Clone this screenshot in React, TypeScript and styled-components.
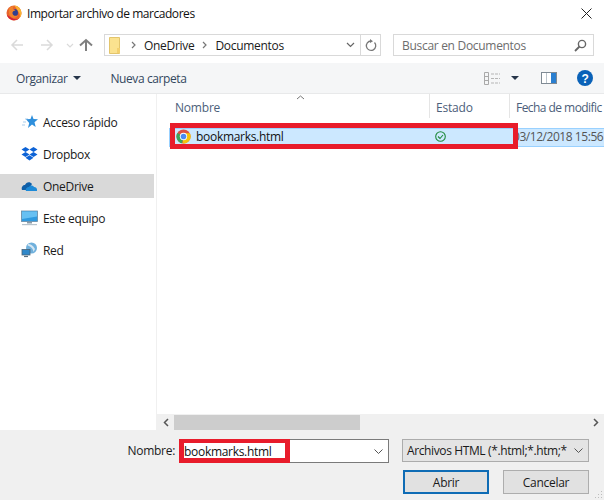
import React from "react";
import styled, { createGlobalStyle } from "styled-components";

const Global = createGlobalStyle`
  html, body { margin: 0; padding: 0; background: #fff; }
  * { box-sizing: border-box; }
`;

const Dialog = styled.div`
  width: 604px; height: 500px; display: flex; flex-direction: column; overflow: hidden;
  font-family: "Open Sans", "Noto Sans", sans-serif; font-size: 12px; color: #1a1a1a; background: #fff; letter-spacing: -0.3px;
`;
const TitleBar = styled.div`
  height: 26px; flex: none; display: flex; align-items: center; padding: 0 12px 0 6px; gap: 5px;
`;
const Title = styled.span`flex: 1; font-size: 12px; color: #111; letter-spacing: -0.45px;`;
const NavRow = styled.div`
  height: 37px; flex: none; display: flex; align-items: center; padding: 1px 10px 0 10px;
`;
const NavIcons = styled.div`width: 94px; flex: none; display: flex; align-items: center;`;
const AddressBar = styled.div`
  width: 277px; height: 22px; flex: none; border: 1px solid #d9d9d9; display: flex; align-items: center; padding-left: 4px;
`;
const Crumbs = styled.div`flex: 1; display: flex; align-items: center; gap: 8px; color: #1a1a1a;`;
const CrumbArrow = styled.svg<{ $first?: boolean }>`margin-left: ${p => (p.$first ? 2 : 0)}px;`;
const Refresh = styled.div`
  width: 20px; height: 20px; border-left: 1px solid #d9d9d9; display: flex; align-items: center; justify-content: center;
`;
const Dropdown = styled.div`width: 20px; display: flex; align-items: center; justify-content: center;`;
const SearchBox = styled.div`
  margin-left: 12px; width: 201px; height: 22px; flex: none; border: 1px solid #d9d9d9; display: flex; align-items: center;
  justify-content: space-between; padding: 0 6px 0 8px; color: #6d6d6d;
`;
const ToolBar = styled.div`
  height: 31px; flex: none; background: #f5f6f7; border-bottom: 1px solid #e8e9ea; display: flex; align-items: center;
  padding: 0 11px 0 16px; color: #33475e;
`;
const ToolLabel = styled.span`display: inline-flex; align-items: center; gap: 6px; margin-right: 29px; letter-spacing: -0.4px;`;
const Spacer = styled.div`flex: 1;`;
const ToolIcons = styled.div`display: flex; align-items: center;`;
const ToolIcon = styled.svg<{ $gap: number }>`margin-left: ${p => p.$gap}px;`;
const Main = styled.div`flex: 1; min-height: 0; display: flex;`;
const Sidebar = styled.div`
  width: 157px; flex: none; border-right: 1px solid #f0f0f0; padding-top: 16px; padding-right: 2px; display: flex; flex-direction: column; gap: 8px;
`;
const NavItem = styled.div<{ $active?: boolean }>`
  height: 24px; display: flex; align-items: center; gap: 5px; padding-left: 21px;
  background: ${p => (p.$active ? "#d9d9d9" : "transparent")}; color: #1a1a1a;
`;
const FileArea = styled.div`flex: 1; min-width: 0; display: flex; flex-direction: column; position: relative;`;
const Header = styled.div`height: 24px; flex: none; display: flex; color: #4c607a; position: relative; letter-spacing: -0.2px;`;
const HeadCell = styled.div<{ $w: number; $pad?: number; $last?: boolean }>`
  width: ${p => p.$w}px; flex: none; height: 24px; padding: 2px 0 0 ${p => p.$pad ?? 6}px; display: flex; align-items: center; white-space: nowrap; overflow: hidden;
  border-right: ${p => (p.$last ? "0" : "1px solid #e5e5e5")};
  letter-spacing: ${p => (p.$last ? "-0.55px" : "-0.2px")};
`;
const SortCaret = styled.svg`position: absolute; left: 139px; top: 1px;`;
const Rows = styled.div`flex: 1; padding-top: 10px; padding-left: 12px;`;
const FileRow = styled.div`
  height: 19px; display: flex; align-items: center; background: #cce8ff; border: 1px solid #99d1ff; border-right: 0; padding-bottom: 2px;
`;
const NameCell = styled.div`width: 261px; flex: none; display: flex; align-items: center; gap: 5px; padding-left: 6px; color: #111;`;
const StateCell = styled.div`width: 80px; flex: none; padding-left: 4px; display: flex;`;
const DateCell = styled.div`white-space: nowrap; color: #555; padding-left: 2px; letter-spacing: -0.45px;`;
const RowFrame = styled.div`
  position: absolute; left: 13px; top: 29px; width: 348px; height: 26px; border: 5px solid #e81c2b; pointer-events: none;
`;
const HScroll = styled.div`height: 16px; flex: none; background: #f0f0f0; display: flex; align-items: center;`;
const ScrollBtn = styled.div`width: 17px; flex: none; display: flex; align-items: center; justify-content: center;`;
const ScrollTrack = styled.div`flex: 1; height: 15px;`;
const Thumb = styled.div`width: 186px; height: 100%; background: #cdcdcd;`;
const Footer = styled.div`
  height: 70px; flex: none; background: #f0f0f0; position: relative; padding: 9px 15px 0 0; display: flex; flex-direction: column; gap: 7px;
`;
const FooterRow = styled.div`display: flex; justify-content: flex-end; align-items: flex-start;`;
const FieldLabel = styled.span`margin-right: 4px; color: #1a1a1a; line-height: 24px;`;
const NameInput = styled.div`
  width: 210px; height: 24px; background: #fff; border: 1px solid #7a7a7a; position: relative; display: flex; align-items: center; justify-content: flex-end; padding-right: 5px;
`;
const NameText = styled.span`
  position: absolute; left: 4px; top: 3px; color: #111; line-height: 17px;
`;
const NameFrame = styled.div`
  position: absolute; left: -1px; top: -1px; width: 111px; height: 24px; border: solid #e81c2b; border-width: 4px 5px 5px 5px; pointer-events: none;
`;
const TypeSelect = styled.div`
  margin-left: 13px; width: 187px; height: 23px; background: #e4e4e4; border: 1px solid #acacac; display: flex; align-items: center;
  justify-content: space-between; padding: 0 5px 0 4px; color: #1a1a1a; white-space: nowrap; letter-spacing: -0.38px;
`;
const Btn = styled.div<{ $primary?: boolean }>`
  width: 86px; height: 24px; display: flex; align-items: center; justify-content: center; color: #1a1a1a;
  background: #e1e1e1; border: ${p => (p.$primary ? "2px solid #0f6cb5" : "1px solid #adadad")}; margin-left: ${p => (p.$primary ? 0 : 14)}px;
`;
const Grip = styled.svg`position: absolute; right: 1px; bottom: 1px;`;

const Firefox = () => (
  <svg width="16" height="16" viewBox="0 0 16 16">
    <circle cx="8" cy="8" r="7.5" fill="#e8632b" />
    <path d="M8 .5a7.5 7.5 0 0 1 7.5 7.5c0 2-1 4-2 5 .6-2 .4-4-.6-5.500C12 6 10.500 3 8 .5z" fill="#f9b233" />
    <path d="M1 10a7.500 7.500 0 0 0 12 3.500c-2 1-5 1-7-.5C4 12 2.500 11 1 10z" fill="#d2203c" />
    <circle cx="8.200" cy="7.800" r="3.800" fill="#2f3f8f" />
    <path d="M3 4c1-2 3-3 5-3-1 1-1.500 2-1 3 1 .3 2 .8 2.500 1.500C8 5.500 6 6.500 6.500 8.500 7 11 10 11.500 12 10c-1 2.500-4 3.500-6 2.500C3.500 11.500 2.500 8 3 4z" fill="#f0822c" />
  </svg>
);
const Chrome = () => (
  <svg width="15" height="15" viewBox="0 0 16 16">
    <circle cx="8" cy="8" r="7.500" fill="#dd5144" />
    <path d="M8 8 1.500 4.200A7.500 7.500 0 0 0 6.500 15.300z" fill="#3ba55c" />
    <path d="M8 4.500h6.800A7.500 7.500 0 0 1 7 15.400L8 8z" fill="#f4c20d" />
    <circle cx="8" cy="8" r="3.900" fill="#fff" />
    <circle cx="8" cy="8" r="3" fill="#4a8af4" />
  </svg>
);
const Star = () => (
  <svg width="17" height="16" viewBox="0 0 17 16">
    <path d="M4 5h3M2 8h3M1 11h3" stroke="#a9cdec" strokeWidth="1" />
    <path d="M11 1l1.500 4 4.500.3-3.500 3 1.200 4.700L11 10.500 7 14l1.200-5L5 5.300 9.500 5z" fill="#2e8fdc" />
  </svg>
);
const Dropbox = () => (
  <svg width="17" height="16" viewBox="0 0 16 16" fill="#0d63d6">
    <path d="M4 1l4 2.500L4 6 0 3.500zM12 1l4 2.500L12 6 8 3.500zM4 6l4 2.500L4 11 0 8.500zM12 6l4 2.500L12 11 8 8.500zM4 11.700 8 9.200l4 2.500L8 14.500z" />
  </svg>
);
const Cloud = () => (
  <svg width="17" height="16" viewBox="0 0 17 16">
    <path d="M1 12c-1-3 1-5 3-5 1-3 5-4 7-1l-4 6z" fill="#0f5fa8" />
    <path d="M5 13c-1-2 1-4 3-4 1-2 4-2 5 0 2 0 3.500 1.500 3 4z" fill="#1c8ad8" />
  </svg>
);
const Monitor = () => (
  <svg width="17" height="16" viewBox="0 0 17 16">
    <rect x="0.500" y="1" width="16" height="10.500" fill="#2f9ae0" stroke="#6c8ba3" strokeWidth="0.800" />
    <path d="M1 1.500h15v5L1 9z" fill="#67c0f2" />
    <path d="M6 12h5v1.500H6z" fill="#8b9aa6" />
    <path d="M1 14h15v1.200H1z" fill="#b7c3cc" />
  </svg>
);
const Network = () => (
  <svg width="17" height="16" viewBox="0 0 17 16">
    <circle cx="10.500" cy="6" r="5.500" fill="#6fb0dc" />
    <path d="M7 2c2 0 5 1 7 5l-1.500 3C12 6 9 4 6.500 3.500z" fill="#d4e6f3" />
    <rect x="1" y="7.500" width="8" height="5.500" fill="#2f87c9" stroke="#4a6377" strokeWidth="0.800" />
    <path d="M3 14.500h4" stroke="#5a6e7e" strokeWidth="1.200" />
  </svg>
);

export default function App() {
  return (
    <Dialog>
      <Global />
      <TitleBar>
        <Firefox />
        <Title>Importar archivo de marcadores</Title>
        <svg width="11" height="11" viewBox="0 0 11 11"><path d="M.5.500l10 10M10.500.500l-10 10" stroke="#222" strokeWidth="1" fill="none" /></svg>
      </TitleBar>
      <NavRow>
        <NavIcons>
          <svg width="84" height="14" viewBox="0 0 84 14" fill="none">
            <path d="M13 7H2M7 2 2 7l5 5" stroke="#dadada" strokeWidth="1.500" />
            <path d="M31 7h11M37 2l5 5-5 5" stroke="#dadada" strokeWidth="1.500" />
            <path d="M57 6l3 3 3-3" stroke="#dadada" strokeWidth="1.200" />
            <path d="M81 13V2M75 7.500 81 2l6 5.500" stroke="#808080" strokeWidth="2" transform="translate(-5 0)" />
          </svg>
        </NavIcons>
        <AddressBar>
          <Crumbs>
            <svg width="12" height="17" viewBox="0 0 12 17"><path d="M.5.500h10v16H.5z" fill="#fbe28f" stroke="#e3c56c" /><path d="M8 11h3v5H8z" fill="#f3d06f" /></svg>
            <CrumbArrow $first width="5" height="8" viewBox="0 0 5 8"><path d="M1 1l3 3-3 3" stroke="#777" strokeWidth="1.200" fill="none" /></CrumbArrow>
            <span>OneDrive</span>
            <CrumbArrow width="5" height="8" viewBox="0 0 5 8"><path d="M1 1l3 3-3 3" stroke="#777" strokeWidth="1.200" fill="none" /></CrumbArrow>
            <span>Documentos</span>
          </Crumbs>
          <Dropdown>
            <svg width="9" height="6" viewBox="0 0 9 6"><path d="M1 1l3.500 3.500L8 1" stroke="#666" strokeWidth="1.200" fill="none" /></svg>
          </Dropdown>
          <Refresh>
            <svg width="12" height="13" viewBox="0 0 12 13" fill="none"><path d="M9.500 3.500A4.700 4.700 0 1 1 6 2" stroke="#777" strokeWidth="1.300" /><path d="M5 0l3 2.200L5 4z" fill="#777" /></svg>
          </Refresh>
        </AddressBar>
        <SearchBox>
          <span>Buscar en Documentos</span>
          <svg width="13" height="13" viewBox="0 0 13 13" fill="none"><circle cx="8" cy="5" r="3.600" stroke="#666" strokeWidth="1.400" /><path d="M5.500 7.500 1 12" stroke="#666" strokeWidth="1.800" /></svg>
        </SearchBox>
      </NavRow>
      <ToolBar>
        <ToolLabel>
          Organizar
          <svg width="8" height="4" viewBox="0 0 8 4"><path d="M0 0h8L4 4z" fill="#26364a" /></svg>
        </ToolLabel>
        <ToolLabel>Nueva carpeta</ToolLabel>
        <Spacer />
        <ToolIcons>
          <svg width="17" height="13" viewBox="0 0 17 13" fill="none">
            <path d="M.5.500h4v12h-4zM.5 4.500h4M.5 8.500h4" stroke="#a9a9a9" />
            <path d="M7 2h9M7 6.500h9M7 11h9" stroke="#b5b5b5" strokeDasharray="3 1" />
          </svg>
          <ToolIcon $gap={10} width="8" height="4" viewBox="0 0 8 4"><path d="M0 0h8L4 4z" fill="#26364a" /></ToolIcon>
          <ToolIcon $gap={22} width="16" height="12" viewBox="0 0 16 12">
            <rect x="0.500" y="0.500" width="15" height="11" fill="#fff" stroke="#7f8a94" />
            <rect x="10" y="1" width="5" height="10" fill="#2a7fd0" />
            <rect x="5" y="1" width="1" height="10" fill="#bcc5cc" />
          </ToolIcon>
          <ToolIcon $gap={20} width="16" height="16" viewBox="0 0 16 16">
            <circle cx="8" cy="8" r="8" fill="#0a62b8" />
            <text x="8" y="12.500" textAnchor="middle" fontSize="12" fontWeight="700" fill="#fff" fontFamily="Liberation Sans, sans-serif">?</text>
          </ToolIcon>
        </ToolIcons>
      </ToolBar>
      <Main>
        <Sidebar>
          <NavItem><Star /><span>Acceso rápido</span></NavItem>
          <NavItem><Dropbox /><span>Dropbox</span></NavItem>
          <NavItem $active><Cloud /><span>OneDrive</span></NavItem>
          <NavItem><Monitor /><span>Este equipo</span></NavItem>
          <NavItem><Network /><span>Red</span></NavItem>
        </Sidebar>
        <FileArea>
          <Header>
            <HeadCell $w={273} $pad={18}>Nombre</HeadCell>
            <HeadCell $w={80}>Estado</HeadCell>
            <HeadCell $w={94} $last>Fecha de modific</HeadCell>
            <SortCaret width="9" height="5" viewBox="0 0 9 5"><path d="M1 4l3.500-3L8 4" stroke="#777" fill="none" /></SortCaret>
          </Header>
          <Rows>
            <FileRow>
              <NameCell><Chrome /><span>bookmarks.html</span></NameCell>
              <StateCell>
                <svg width="11" height="11" viewBox="0 0 11 11" fill="none"><circle cx="5.500" cy="5.500" r="4.800" stroke="#1f8a3c" strokeWidth="1.100" /><path d="M3 5.500l2 2 3-3.500" stroke="#1f8a3c" strokeWidth="1.100" /></svg>
              </StateCell>
              <DateCell>03/12/2018 15:56</DateCell>
            </FileRow>
          </Rows>
          <RowFrame />
          <HScroll>
            <ScrollBtn><svg width="6" height="9" viewBox="0 0 6 9"><path d="M5 1 1.500 4.500 5 8" stroke="#555" strokeWidth="1.500" fill="none" /></svg></ScrollBtn>
            <ScrollTrack><Thumb /></ScrollTrack>
            <ScrollBtn><svg width="6" height="9" viewBox="0 0 6 9"><path d="M1 1l3.500 3.500L1 8" stroke="#555" strokeWidth="1.500" fill="none" /></svg></ScrollBtn>
          </HScroll>
        </FileArea>
      </Main>
      <Footer>
        <FooterRow>
          <FieldLabel>Nombre:</FieldLabel>
          <NameInput>
            <NameText>bookmarks.html</NameText>
            <NameFrame />
            <svg width="9" height="5" viewBox="0 0 9 5"><path d="M.5.500l4 4 4-4" stroke="#555" fill="none" /></svg>
          </NameInput>
          <TypeSelect>
            <span>Archivos HTML (*.html;*.htm;*</span>
            <svg width="9" height="5" viewBox="0 0 9 5"><path d="M.5.500l4 4 4-4" stroke="#555" fill="none" /></svg>
          </TypeSelect>
        </FooterRow>
        <FooterRow>
          <Btn $primary>Abrir</Btn>
          <Btn>Cancelar</Btn>
        </FooterRow>
        <Grip width="9" height="9" viewBox="0 0 9 9" fill="#bdbdbd"><path d="M7 1h1v1H7zM4 4h1v1H4zM7 4h1v1H7zM1 7h1v1H1zM4 7h1v1H4zM7 7h1v1H7z" /></Grip>
      </Footer>
    </Dialog>
  );
}
